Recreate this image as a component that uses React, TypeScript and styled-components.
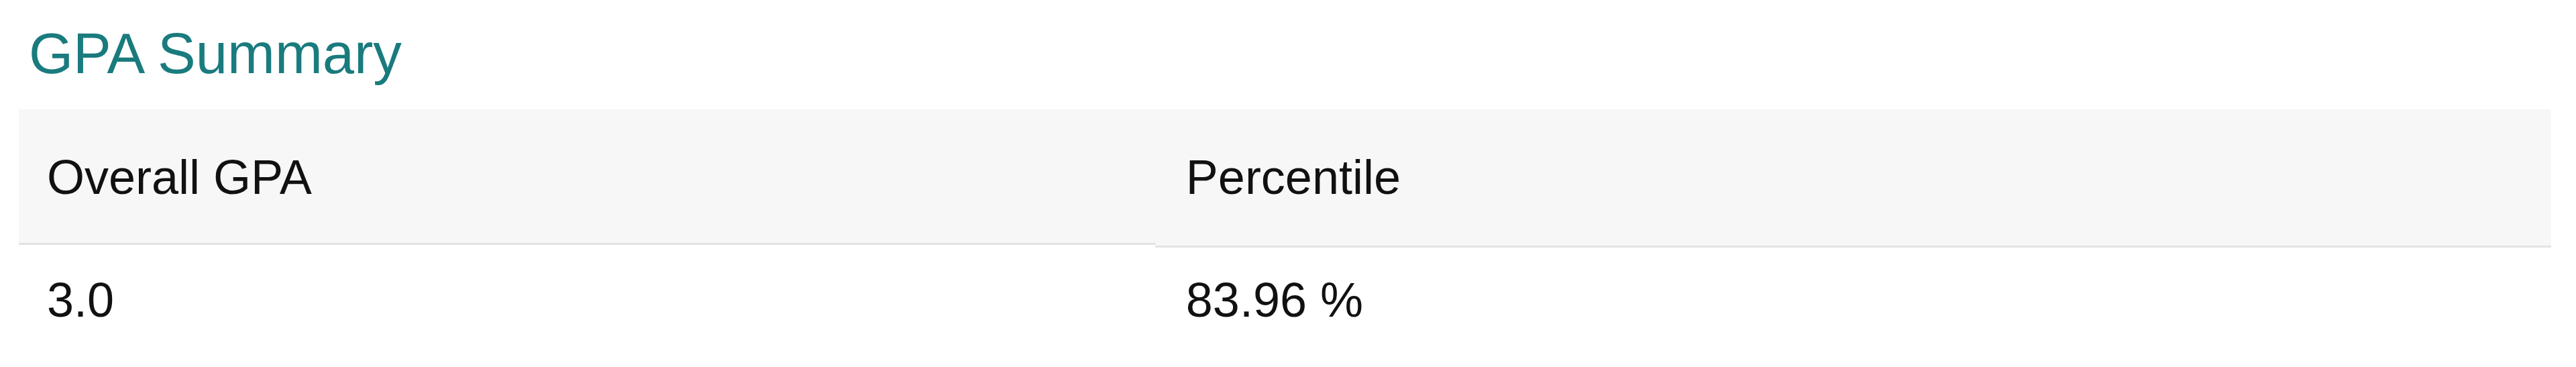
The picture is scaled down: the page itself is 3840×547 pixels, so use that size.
import React from 'react';
import styled, { createGlobalStyle } from 'styled-components';

const GlobalStyle = createGlobalStyle`
  body {
    margin: 0;
    background: #ffffff;
    font-family: 'Liberation Sans', Arial, sans-serif;
  }
`;

const Section = styled.section`
  padding: 32px 37px 0 28px;
`;

const Title = styled.h2`
  margin: 0 0 36px 15px;
  font-size: 85px;
  font-weight: 400;
  line-height: 95px;
  color: #1a7b7e;
`;

const Row = styled.div`
  display: flex;
  align-items: flex-start;
`;

const HeadCell = styled.div<{ $width: string; $pad: number; $extra?: number }>`
  width: ${(p) => p.$width};
  box-sizing: border-box;
  padding: 60px ${(p) => p.$pad}px ${(p) => 57 + (p.$extra || 0)}px;
  background: #f7f7f7;
  border-bottom: 3px solid #e3e3e3;
  font-size: 72px;
  line-height: 82px;
  color: #111111;
`;

const BodyCell = styled.div<{ $width: string; $pad: number }>`
  width: ${(p) => p.$width};
  box-sizing: border-box;
  padding: 37px ${(p) => p.$pad}px 31px;
  font-size: 72px;
  line-height: 82px;
  color: #111111;
`;

const columns = [
  { width: '44.87%', pad: 42 },
  { width: '55.13%', pad: 46 },
];

const summary = { gpa: '3.0', percentile: '83.96 %' };

const App: React.FC = () => {
  return (
    <>
      <GlobalStyle />
      <Section>
        <Title>GPA Summary</Title>
        <Row>
          <HeadCell $width={columns[0].width} $pad={columns[0].pad}>
            Overall GPA
          </HeadCell>
          <HeadCell $width={columns[1].width} $pad={columns[1].pad} $extra={4}>
            Percentile
          </HeadCell>
        </Row>
        <Row>
          <BodyCell $width={columns[0].width} $pad={columns[0].pad}>
            {summary.gpa}
          </BodyCell>
          <BodyCell $width={columns[1].width} $pad={columns[1].pad}>
            {summary.percentile}
          </BodyCell>
        </Row>
      </Section>
    </>
  );
};

export default App;
